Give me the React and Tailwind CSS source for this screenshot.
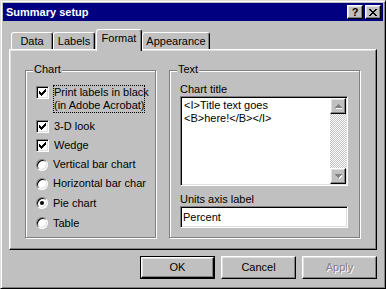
import React from 'react';

const raised =
  'border border-t-white border-l-white border-r-black border-b-black shadow-[inset_-1px_-1px_0_#808080,inset_1px_1px_0_#dfdfdf]';
const sunken =
  'border border-t-[#808080] border-l-[#808080] border-r-white border-b-white shadow-[inset_1px_1px_0_#000,inset_-1px_-1px_0_#dfdfdf]';

const CheckMark = () => (
  <svg width="7" height="7" viewBox="0 0 7 7" shapeRendering="crispEdges">
    {[2, 3, 4, 3, 2, 1, 0].map((y, x) => (
      <rect key={x} x={x} y={y} width="1" height="3" fill="#000" />
    ))}
  </svg>
);

const CheckBox = ({ className = '' }) => (
  <div className={`w-[13px] h-[13px] shrink-0 bg-white flex items-center justify-center ${sunken} ${className}`}>
    <CheckMark />
  </div>
);

const Radio = ({ checked }) => (
  <div className={`w-[12px] h-[12px] shrink-0 rounded-full bg-white flex items-center justify-center ${sunken}`}>
    {checked && <div className="w-[4px] h-[4px] rounded-full bg-black" />}
  </div>
);

const Row = ({ h, children, label }) => (
  <div className={`flex items-center ${h}`}>
    {children}
    <span className="ml-[5px] leading-[13px] whitespace-nowrap">{label}</span>
  </div>
);

const Tab = ({ label, width, active }) =>
  active ? (
    <div
      className={`relative z-10 -mb-[2px] ml-[1px] h-[22px] ${width} bg-[#c0c0c0] border-t border-l border-r border-t-white border-l-white border-r-black rounded-t-[3px] shadow-[inset_-1px_0_0_#808080] flex justify-center pt-[2px] leading-[13px]`}
    >
      {label}
    </div>
  ) : (
    <div
      className={`h-[17px] ${width} border-t border-l border-r border-t-white border-l-white border-r-black rounded-t-[3px] shadow-[inset_-1px_0_0_#808080] flex items-center justify-center leading-[13px]`}
    >
      {label}
    </div>
  );

const ArrowButton = ({ down }) => (
  <div className={`w-[16px] h-[16px] shrink-0 bg-[#c0c0c0] flex items-center justify-center ${raised}`}>
    <svg width="7" height="5" viewBox="0 0 7 5" shapeRendering="crispEdges">
      {down ? (
        <>
          <path d="M1 1h7v1h-1v1h-1v1h-1v1h-1v-1h-1v-1h-1v-1h-1z" fill="#fff" />
          <path d="M0 0h7v1h-1v1h-1v1h-1v1h-1v-1h-1v-1h-1v-1h-1z" fill="#808080" />
        </>
      ) : (
        <>
          <path d="M4 1h1v1h1v1h1v1h1v1h-7v-1h1v-1h1v-1h1z" fill="#fff" />
          <path d="M3 0h1v1h1v1h1v1h1v1h-7v-1h1v-1h1v-1h1z" fill="#808080" />
        </>
      )}
    </svg>
  </div>
);

const Button = ({ children, isDefault, disabled }) => {
  const inner = (
    <div className={`w-full h-full flex items-center justify-center ${raised}`}>
      <span className={disabled ? 'text-[#808080] [text-shadow:1px_1px_0_#fff]' : ''}>{children}</span>
    </div>
  );
  return isDefault ? (
    <div className="w-[75px] h-[23px] border border-black">{inner}</div>
  ) : (
    <div className="w-[75px] h-[23px]">{inner}</div>
  );
};

export default function App() {
  return (
    <div className="w-[386px] h-[289px] bg-[#c0c0c0] text-black text-[11px] font-['Liberation_Sans',Arial,sans-serif] border border-t-[#dfdfdf] border-l-[#dfdfdf] border-r-black border-b-black shadow-[inset_1px_1px_0_#fff,inset_-1px_-1px_0_#808080] p-[2px] flex flex-col">
      {/* title bar */}
      <div className="h-[18px] shrink-0 bg-[#000080] flex items-center pl-[3px] pr-[2px]">
        <span className="text-white font-bold leading-[13px]">Summary setup</span>
        <div className="ml-auto flex gap-[2px]">
          <div className={`w-[16px] h-[14px] bg-[#c0c0c0] flex items-center justify-center font-bold leading-[10px] ${raised}`}>
            ?
          </div>
          <div className={`w-[16px] h-[14px] bg-[#c0c0c0] flex items-center justify-center ${raised}`}>
            <svg width="8" height="7" viewBox="0 0 8 7" shapeRendering="crispEdges">
              <path d="M0 0h2v1h1v1h2v-1h1v-1h2v1h-1v1h-1v1h-1v1h1v1h1v1h1v1h-2v-1h-1v-1h-2v1h-1v1h-2v-1h1v-1h1v-1h1v-1h-1v-1h-1v-1h-1z" fill="#000" />
            </svg>
          </div>
        </div>
      </div>

      {/* tabs */}
      <div className="mt-[8px] ml-[6px] pl-[2px] flex items-end">
        <Tab label="Data" width="w-[42px]" />
        <Tab label="Labels" width="w-[42px]" />
        <Tab label="Format" width="w-[46px]" active />
        <Tab label="Appearance" width="w-[68px]" />
      </div>

      {/* tab panel */}
      <div className={`mx-[6px] h-[201px] shrink-0 pl-[15px] pt-[20px] flex gap-[13px] ${raised}`}>
        {/* Chart group */}
        <div className="relative w-[131px] h-[168px] border border-[#808080] shadow-[inset_1px_1px_0_#fff,1px_1px_0_#fff] pl-[10px] pt-[14px]">
          <span className="absolute -top-[8px] left-[7px] px-[1px] bg-[#c0c0c0] leading-[13px]">Chart</span>
          <div className="flex items-start">
            <CheckBox className="mt-[1px]" />
            <div className="ml-[4px] w-[92px] whitespace-nowrap border border-dotted border-black leading-[13px]">
              <div>Print labels in black</div>
              <div>(in Adobe Acrobat)</div>
            </div>
          </div>
          <div className="mt-[3px]">
            <Row h="h-[20px]" label="3-D look">
              <CheckBox />
            </Row>
            <Row h="h-[19px]" label="Wedge">
              <CheckBox />
            </Row>
            <Row h="h-[19px]" label="Vertical bar chart">
              <Radio />
            </Row>
            <Row h="h-[19px]" label="Horizontal bar char">
              <Radio />
            </Row>
            <Row h="h-[20px]" label="Pie chart">
              <Radio checked />
            </Row>
            <Row h="h-[20px]" label="Table">
              <Radio />
            </Row>
          </div>
        </div>

        {/* Text group */}
        <div className="relative w-[191px] h-[168px] border border-[#808080] shadow-[inset_1px_1px_0_#fff,1px_1px_0_#fff] pl-[10px] pt-[12px]">
          <span className="absolute -top-[8px] left-[7px] px-[1px] bg-[#c0c0c0] leading-[13px]">Text</span>
          <div className="leading-[13px]">Chart title</div>
          <div className={`w-[168px] h-[90px] bg-white flex ${sunken}`}>
            <div className="flex-1 pl-[3px] pt-[2px] leading-[13px] whitespace-nowrap">
              <div>{'<I>Title text goes'}</div>
              <div>{'<B>here!</B></I>'}</div>
            </div>
            <div className="w-[16px] mt-[1px] mb-[1px] mr-[1px] flex flex-col">
              <ArrowButton />
              <div className="flex-1 bg-[image:repeating-conic-gradient(#c0c0c0_0_25%,#ffffff_0_50%)] bg-[length:2px_2px]" />
              <ArrowButton down />
            </div>
          </div>
          <div className="mt-[7px] leading-[13px]">Units axis label</div>
          <div className={`w-[168px] h-[22px] bg-white flex items-center pl-[2px] ${sunken}`}>Percent</div>
        </div>
      </div>

      {/* buttons */}
      <div className="mt-[6px] mr-[6px] flex justify-end gap-[6px]">
        <Button isDefault>OK</Button>
        <Button>Cancel</Button>
        <Button disabled>Apply</Button>
      </div>
    </div>
  );
}
